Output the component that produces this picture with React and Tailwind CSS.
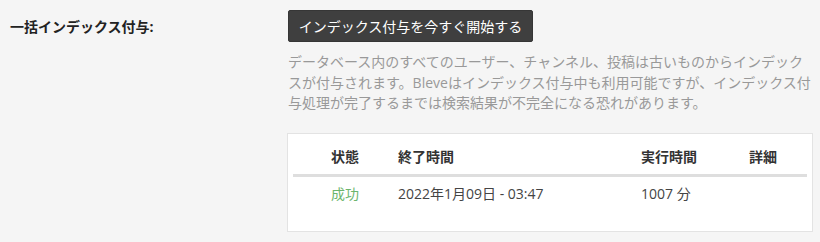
import React from "react";

export default function App() {
  return (
    <div
      className="w-[820px] h-[242px] bg-[#f5f5f5] text-[14px] text-[#333]"
      style={{ fontFamily: '"Open Sans", "Noto Sans CJK JP", sans-serif' }}
    >
      <div className="flex pt-[10px]">
        <div className="w-[288px] pl-[10px] h-[32px] flex items-center font-bold text-[#222]">
          一括インデックス付与:
        </div>
        <div className="w-[525px] flex flex-col items-start">
          <button className="h-[32px] w-[245px] bg-[#3f3f3f] border border-[#363636] text-white text-[14px] rounded-[2px] flex items-center justify-center">
            インデックス付与を今すぐ開始する
          </button>
          <p className="mt-[10px] w-[524px] leading-[20.5px] text-[#999]">
            データベース内のすべてのユーザー、チャンネル、投稿は古いものからインデックスが付与されます。Bleveはインデックス付与中も利用可能ですが、インデックス付与処理が完了するまでは検索結果が不完全になる恐れがあります。
          </p>
          <div className="mt-[19px] -ml-[1px] w-[526px] bg-white border border-[#e3e3e3] px-[5px] pt-[6px] pb-[20px]">
            <div className="grid grid-cols-[67px_243px_108px_1fr] h-[34px] items-center font-bold text-[#333] border-b-[3px] border-[#dedede] pl-[38px] box-content">
              <div>状態</div>
              <div>終了時間</div>
              <div>実行時間</div>
              <div>詳細</div>
            </div>
            <div className="grid grid-cols-[67px_243px_108px_1fr] h-[34px] items-center text-[#444] pl-[38px]">
              <div className="text-[#6cb56c]">成功</div>
              <div>2022年1月09日 - 03:47</div>
              <div>1007 分</div>
              <div></div>
            </div>
          </div>
        </div>
      </div>
    </div>
  );
}
